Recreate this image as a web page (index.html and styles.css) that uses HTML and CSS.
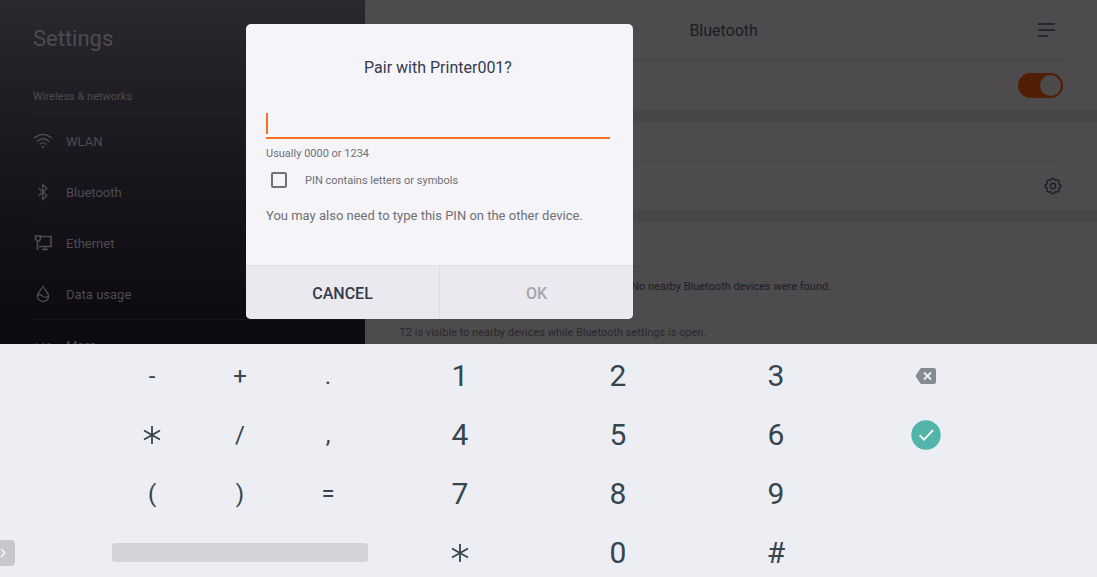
FILE: index.html
```html
<!DOCTYPE html>
<html lang="en">
<head>
    <meta charset="UTF-8">
    <meta name="viewport" content="width=device-width, initial-scale=1.0">
    <title>Bluetooth settings</title>
    <link rel="stylesheet" href="styles.css">
</head>
<body>
    <div class="screen">
        <nav class="sidebar">
            <h1>Settings</h1>
            <h2>Wireless &amp; networks</h2>
            <ul>
                <li><a href="#wlan">
                    <svg width="20" height="20" viewBox="0 0 20 20"><path d="M1 7.200Q10-.4 19 7.200M3.800 10.400Q10 5 16.200 10.400M6.600 13.400Q10 10.400 13.400 13.400"/><circle class="solid" cx="10" cy="16" r="1.200"/></svg>
                    WLAN</a></li>
                <li><a href="#bluetooth">
                    <svg width="20" height="20" viewBox="0 0 20 20"><path d="M5.500 6l8.300 7.500L9.700 17.400V2.600l4.100 3.700L5.500 14"/></svg>
                    Bluetooth</a></li>
                <li><a href="#ethernet">
                    <svg width="20" height="20" viewBox="0 0 20 20"><path class="thick" d="M7.500 3.500H18v10H6M12 14v3M9 16.500h6M4.500 8v9"/><path class="thick" d="M2.500 3h5v3l-1.500 2H4L2.500 6z"/></svg>
                    Ethernet</a></li>
                <li><a href="#data">
                    <svg width="20" height="20" viewBox="0 0 20 20"><path d="M10 2.500C7.500 6.500 4.400 9 4.400 12.200a5.600 5.300 0 0 0 11.200 0C15.600 9 12.500 6.500 10 2.500zM4.500 11.500c3-2 4 0 5.500 1s3.500.8 5.300-.2"/></svg>
                    Data usage</a></li>
                <li><a href="#more">
                    <svg width="20" height="20" viewBox="0 0 20 20"><circle cx="4" cy="10.500" r="1.500"/><circle cx="10" cy="10.500" r="1.500"/><circle cx="16" cy="10.500" r="1.500"/></svg>
                    More</a></li>
            </ul>
        </nav>
        <main class="panel">
            <header>
                <h2>Bluetooth</h2>
                <button class="menu" aria-label="Menu">
                    <svg width="17" height="14" viewBox="0 0 17 14"><path d="M0 1h17M0 7h17M0 13h10"/></svg>
                </button>
            </header>
            <section class="switch-row">
                <input type="checkbox" class="switch" aria-label="Bluetooth" checked>
            </section>
            <section class="paired">
                <div class="group-title"></div>
                <div class="device">
                    <button class="gear" aria-label="Device settings">
                        <svg width="18" height="18" viewBox="0 0 18 18"><path d="M7.300 2.800L8 1.300h2l.7 1.500 1.300.5 1.600-.5 1.600 1.600-.5 1.600.5 1.300 1.500.7v2l-1.500.7-.5 1.300.5 1.600-1.600 1.600-1.600-.5-1.300.5-.7 1.500H8l-.7-1.500-1.300-.5-1.600.5-1.600-1.600.5-1.600-.5-1.300L1.300 10V8l1.500-.7.5-1.300-.5-1.600 1.600-1.600 1.600.5z"/><rect x="6.500" y="6.500" width="5" height="5" rx="1.500"/></svg>
                    </button>
                </div>
            </section>
            <section class="available">
                <div class="group-title"></div>
                <p class="empty">No nearby Bluetooth devices were found.</p>
                <p class="note">T2 is visible to nearby devices while Bluetooth settings is open.</p>
            </section>
        </main>

        <form class="dialog" role="dialog" aria-labelledby="dialog-title">
            <div class="dialog-body">
                <h3 id="dialog-title">Pair with Printer001?</h3>
                <div class="pin-field">
                    <span class="caret"></span>
                    <input type="text" id="pin" aria-label="PIN">
                </div>
                <label for="pin" class="hint">Usually 0000 or 1234</label>
                <div class="check">
                    <input type="checkbox" id="letters">
                    <label for="letters">PIN contains letters or symbols</label>
                </div>
                <p>You may also need to type this PIN on the other device.</p>
            </div>
            <div class="actions">
                <button type="button">CANCEL</button>
                <button type="submit" disabled>OK</button>
            </div>
        </form>
    </div>

    <div class="keyboard">
        <button class="sym first">-</button>
        <button class="sym">+</button>
        <button class="sym">.</button>
        <button class="num">1</button>
        <button>2</button>
        <button>3</button>
        <button aria-label="Delete">
            <svg width="22" height="16" viewBox="0 0 22 16"><path fill="#838c92" d="M6.500 0H19a2 2 0 0 1 2 2v12a2 2 0 0 1-2 2H6.500Q5.500 16 5 15L.5 8 5 1Q5.500 0 6.500 0z"/><path stroke="#edeef3" stroke-width="2" d="M9 4.500l7 7M16 4.500l-7 7"/></svg>
        </button>

        <button class="first" aria-label="Asterisk">
            <svg width="18" height="20" viewBox="0 0 18 20"><path class="star" d="M9 1v18M1 5.500l16 9M17 5.500l-16 9"/></svg>
        </button>
        <button class="sym">/</button>
        <button class="sym">,</button>
        <button class="num">4</button>
        <button>5</button>
        <button>6</button>
        <button aria-label="Done">
            <svg width="30" height="30" viewBox="0 0 30 30"><circle cx="15" cy="15" r="14.700" fill="#52b5a9"/><path stroke="#fff" stroke-width="1.800" fill="none" d="M8.500 15.200l4.500 4.500 9-9.500"/></svg>
        </button>

        <button class="sym first">(</button>
        <button class="sym">)</button>
        <button class="sym">=</button>
        <button class="num">7</button>
        <button>8</button>
        <button>9</button>

        <button class="handle" aria-label="Expand">
            <svg width="6" height="10" viewBox="0 0 6 10"><path d="M1 1l4 4-4 4" fill="none" stroke="#f5f5f8" stroke-width="1.500"/></svg>
        </button>
        <button class="space" aria-label="Space"></button>
        <button class="num" aria-label="Star">
            <svg width="18" height="20" viewBox="0 0 18 20"><path class="star" d="M9 1v18M1 5.500l16 9M17 5.500l-16 9"/></svg>
        </button>
        <button>0</button>
        <button>#</button>
    </div>
</body>
</html>
```
FILE: styles.css
```css
* {
    box-sizing: border-box;
}

body {
    margin: 0;
    height: 100vh;
    display: flex;
    flex-direction: column;
    overflow: hidden;
    font-family: Roboto, sans-serif;
    background: #edeef3;
}

h1, h2, h3, p, ul {
    margin: 0;
    padding: 0;
    font-weight: 400;
}

button {
    border: none;
    padding: 0;
    background: none;
    font-family: inherit;
}

svg {
    display: block;
    flex: none;
}

.screen {
    position: relative;
    flex: 1;
    min-height: 0;
    display: flex;
    overflow: hidden;
}

/* Left column */
.sidebar {
    flex: 0 0 33.3%;
    padding: 24px 0 0 33px;
    background: linear-gradient(#2a292f, #211f25 25%, #17151c 55%, #0f0c12 85%, #0d0a10);
    color: #4d4b50;
}

.sidebar h1 {
    font-size: 22px;
    line-height: 30px;
}

.sidebar h2 {
    margin-top: 32px;
    height: 29px;
    font-size: 11px;
    line-height: 21px;
}

.sidebar ul {
    list-style: none;
}

.sidebar li {
    border-top: 1px solid #242228;
}

.sidebar li + li {
    border-color: #17151b;
}

.sidebar a {
    display: flex;
    align-items: center;
    gap: 13px;
    height: 50px;
    color: inherit;
    font-size: 13px;
    text-decoration: none;
}

.sidebar svg {
    fill: none;
    stroke: #4d4b50;
    stroke-width: 1.3;
}

.sidebar .thick {
    stroke-width: 1.6;
}

.sidebar .solid {
    fill: #4d4b50;
    stroke: none;
}

/* Right column */
.panel {
    flex: 1;
    min-width: 0;
    background: #4d4b4d;
    color: #1b1d26;
}

.panel header {
    display: grid;
    grid-template-columns: 1fr auto 1fr;
    align-items: center;
    height: 60px;
    padding: 0 42px 0 27px;
}

.panel header h2 {
    grid-column: 2;
    font-size: 16px;
}

.menu {
    justify-self: end;
}

.panel svg {
    fill: none;
    stroke: #1b1d26;
    stroke-width: 1.3;
}

.switch-row {
    display: flex;
    align-items: center;
    justify-content: flex-end;
    height: 50px;
    margin: 0 34px;
    border-top: 1px solid #444345;
}

.switch {
    appearance: none;
    display: flex;
    justify-content: flex-end;
    width: 45px;
    height: 25px;
    margin: 0;
    padding: 2px;
    border-radius: 13px;
    background: #501e05;
}

.switch::before {
    content: "";
    width: 21px;
    height: 21px;
    border-radius: 50%;
    background: #4d4b4a;
}

.paired,
.available {
    padding: 0 34px;
    border-top: 12px solid #484648;
}

.group-title {
    height: 39px;
    border-bottom: 1px solid #474547;
}

.available .group-title {
    height: 45px;
}

.device {
    display: flex;
    align-items: center;
    justify-content: flex-end;
    height: 49px;
    padding-right: 1px;
}

.empty {
    padding-top: 10px;
    font-size: 11px;
    line-height: 20px;
    text-align: center;
}

.note {
    margin-top: 26px;
    font-size: 11px;
    line-height: 20px;
    color: #29292e;
}

/* Pairing dialog */
.dialog {
    position: absolute;
    top: 24px;
    left: 246px;
    width: 387px;
    border-radius: 5px;
    overflow: hidden;
    background: #f4f4f9;
    color: #707075;
}

.dialog-body {
    padding: 32px 23px 39px 20px;
}

.dialog h3 {
    font-size: 16px;
    line-height: 24px;
    text-align: center;
    color: #343b4d;
}

.pin-field {
    display: flex;
    align-items: center;
    height: 31px;
    margin-top: 28px;
    padding-top: 2px;
    border-bottom: 2px solid #f5701f;
}

.caret {
    width: 2px;
    height: 21px;
    background: #f5701f;
}

.pin-field input {
    flex: 1;
    min-width: 0;
    border: none;
    outline: none;
    padding: 0;
    background: none;
    font: 16px Roboto, sans-serif;
}

.hint {
    display: block;
    margin-top: 5px;
    font-size: 11px;
    line-height: 20px;
}

.check {
    display: flex;
    align-items: center;
    gap: 18px;
    height: 32px;
    padding-left: 5px;
    font-size: 11px;
}

.check input {
    appearance: none;
    width: 16px;
    height: 16px;
    margin: 0;
    border: 2px solid #707075;
    border-radius: 2px;
}

.dialog p {
    margin-top: 10px;
    font-size: 13px;
    line-height: 20px;
}

.actions {
    display: flex;
    border-top: 1px solid #e0e0e5;
    background: #e9e9ef;
}

.actions button {
    flex: 1;
    height: 53px;
    padding-top: 1px;
    font-size: 16px;
    font-weight: 500;
    color: #343b4d;
}

.actions button + button {
    border-left: 1px solid #dddde3;
    color: #a5a6ad;
}

/* Keyboard, last row runs slightly under the screen edge */
.keyboard {
    flex: none;
    display: grid;
    grid-template-columns: 108fr 88fr 88fr 88fr 9fr 158fr 158fr 158fr 142fr 100fr;
    grid-auto-rows: 59px;
    padding-top: 2px;
    margin-bottom: -5px;
    background: #edeef3;
}

.keyboard button {
    display: flex;
    align-items: center;
    justify-content: center;
    font-size: 30px;
    color: #36454e;
}

.keyboard .sym {
    font-size: 24px;
}

.keyboard .first {
    grid-column: 2;
}

.keyboard .num {
    grid-column: 6;
}

.star {
    fill: none;
    stroke: #36454e;
    stroke-width: 1.8;
}

.keyboard .space {
    grid-column: 2 / span 3;
    align-self: center;
    height: 19px;
    margin: 0 4px;
    border-radius: 3px;
    background: #d3d4d9;
}

.keyboard .handle {
    grid-column: 1;
    align-self: center;
    justify-content: flex-start;
    width: 15px;
    height: 26px;
    border-radius: 0 4px 4px 0;
    background: #c8c8cc;
}
```
